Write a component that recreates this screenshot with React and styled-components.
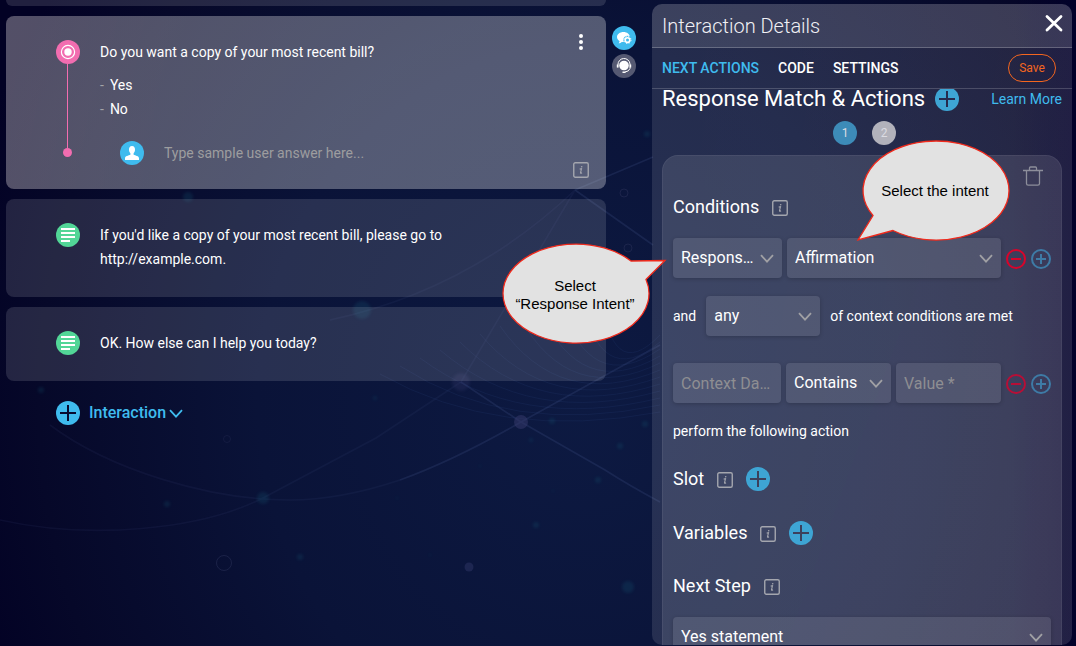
import React from 'react';
import styled, { createGlobalStyle, css } from 'styled-components';

const Global = createGlobalStyle`
  *, *::before, *::after { box-sizing: border-box; }
  html, body { margin: 0; height: 100%; }
  #root { height: 100%; }
  body {
    font-family: Roboto, "Liberation Sans", sans-serif;
    font-size: 14px;
    line-height: 24px;
    color: #fff;
    background: #020226;
    overflow: hidden;
  }
  button, input, select { font: inherit; color: inherit; margin: 0; padding: 0; border: 0; background: none; outline: 0; }
  button { display: inline-flex; align-items: center; justify-content: center; cursor: pointer; }
  h1, h2, h3, p, ul { margin: 0; padding: 0; font-weight: 400; }
  svg { display: block; flex: none; overflow: visible; }
`;

const Page = styled.div`
  position: relative;
  isolation: isolate;
  height: 100vh;
  overflow: hidden;
  display: grid;
  grid-template-columns: minmax(0, 1fr) 24px 436px;
  padding: 0 4px 0 6px;
  background:
    linear-gradient(90deg, rgba(2, 1, 38, 0) 94%, #02012a 100%),
    radial-gradient(ellipse 60% 110% at 54% 62%, #0d1a42 0%, #0a1338 50%, #060829 84%, #020124 100%);
`;

const Backdrop = styled.svg`
  position: absolute;
  inset: 0;
  width: 100%;
  height: 100%;
  z-index: -1;
`;

const Flow = styled.main`
  display: flex;
  flex-direction: column;
  gap: 10px;
  margin-right: 6px;
`;

const Card = styled.article`
  position: relative;
  display: grid;
  grid-template-columns: 24px minmax(0, 1fr);
  column-gap: 20px;
  padding: 24px 120px 26px 50px;
  border-radius: 8px;
  background: ${p => (p.$active
    ? 'linear-gradient(100deg, rgba(255,245,245,.32), rgba(255,255,255,.3) 30%)'
    : 'rgba(255,255,255,.125)')};
  ${p => p.$active && css`padding-bottom: 24px;`}
`;

const CardTail = styled.div`
  height: 6px;
  border-radius: 0 0 8px 8px;
  background: rgba(255, 255, 255, .125);
`;

const Disc = styled.span`
  display: flex;
  align-items: center;
  justify-content: center;
  flex: none;
  width: 24px;
  height: 24px;
  border-radius: 50%;
  background: ${p => p.$color};
`;

const Timeline = styled.div`
  display: flex;
  flex-direction: column;
  align-items: center;
  padding-bottom: 8px;

  &::after {
    content: '';
    width: 9px;
    height: 9px;
    margin-right: 1px;
    border-radius: 50%;
    background: #f26db0;
  }
`;

const Stem = styled.i`
  flex: 1;
  width: 1px;
  margin-right: 1px;
  background: #f26db0;
`;

const Choices = styled.ul`
  list-style: none;
  padding-top: 9px;
`;

const Choice = styled.li`
  display: flex;
  gap: 6px;
  &::before { content: '-'; color: #a3a3a8; }
`;

const Answer = styled.label`
  display: flex;
  align-items: center;
  gap: 20px;
  margin: 20px 0 0 20px;
`;

const AnswerInput = styled.input`
  flex: 1;
  min-width: 0;
  height: 24px;
  &::placeholder { color: #9d9d9f; opacity: 1; }
`;

const CardCorner = styled.div`
  position: absolute;
  display: flex;
  right: 17px;
  ${p => p.$at}: ${p => (p.$at === 'top' ? '18px' : '11px')};
`;

const IconButton = styled.button`
  width: ${p => p.$size || 16}px;
  height: ${p => p.$size || 16}px;
  flex: none;
`;

const InfoButton = styled(IconButton)`
  margin-top: 2px;
`;

const AddInteraction = styled.button`
  align-self: flex-start;
  gap: 9px;
  margin: 10px 0 0 50px;
  color: #3fbbee;
  font-size: 16px;
  font-weight: 500;
`;

const AddLabel = styled.span`
  display: flex;
  align-items: center;
  gap: 3px;
`;

const Rail = styled.nav`
  display: flex;
  flex-direction: column;
  gap: 4px;
  padding-top: 26px;
`;

const Panel = styled.aside`
  display: flex;
  flex-direction: column;
  min-height: 0;
  margin: 4px 0 1px 16px;
  border-radius: 10px;
  overflow: hidden;
  background: linear-gradient(100deg, rgba(255,255,255,.105), rgba(255,245,255,.125));
`;

const PanelHead = styled.header`
  display: flex;
  align-items: center;
  justify-content: space-between;
  height: 44px;
  flex: none;
  padding: 0 8px 0 10px;
  background: rgba(255, 255, 255, .11);
  border-bottom: 1px solid rgba(255, 255, 255, .22);
`;

const PanelTitle = styled.h1`
  font-size: 20px;
  font-weight: 300;
  color: #f0f0f4;
`;

const Tabs = styled.nav`
  display: flex;
  align-items: center;
  gap: 19px;
  height: 41px;
  flex: none;
  padding: 0 16px 0 10px;
  border-bottom: 1px solid rgba(255, 255, 255, .18);
`;

const Tab = styled.button`
  font-weight: 500;
  color: ${p => (p.$active ? '#3fbbee' : '#fff')};
`;

const Save = styled.button`
  margin-left: auto;
  width: 48px;
  height: 28px;
  border: 1px solid #f4661f;
  border-radius: 14px;
  color: #f4661f;
  font-size: 12px;
`;

const PanelBody = styled.div`
  flex: 1;
  min-height: 0;
  overflow: hidden;
  padding: 0 10px;
`;

const Heading = styled.div`
  display: flex;
  align-items: center;
  gap: 10px;
  margin-top: -2px;
  height: 24px;
`;

const HeadingText = styled.h2`
  font-size: 22px;
  line-height: 20px;
`;

const LearnMore = styled.a`
  margin-left: auto;
  color: #3fbbee;
  text-decoration: none;
`;

const Pager = styled.div`
  display: flex;
  justify-content: center;
  gap: 15px;
  padding: 10px 0 10px 5px;
`;

const PageDot = styled.button`
  width: 24px;
  height: 24px;
  border-radius: 50%;
  background: ${p => (p.$active ? '#3d8bb8' : '#b2b2bb')};
  color: #dcdce2;
  font-size: 12px;
`;

const Rule = styled.section`
  display: flex;
  flex-direction: column;
  padding: 10px 10px 60px;
  border: 1px solid rgba(255, 255, 255, .06);
  border-radius: 16px;
  background: linear-gradient(110deg, rgba(255,255,255,.105), rgba(255,245,255,.11));
`;

const RuleTools = styled.div`
  display: flex;
  justify-content: flex-end;
  height: 20px;
  padding-right: 8px;
`;

const Section = styled.div`
  display: flex;
  align-items: center;
  gap: 13px;
  height: 24px;
  margin-top: ${p => p.$top}px;
`;

const SectionTitle = styled.h3`
  font-size: 18px;
`;

const FieldRow = styled.div`
  display: flex;
  align-items: center;
  gap: ${p => p.$gap || 5}px;
  margin-top: ${p => p.$top}px;
`;

const fieldBox = css`
  width: 100%;
  height: 40px;
  padding: 0 8px;
  border-radius: 4px;
  background: rgba(255, 255, 255, .105);
  box-shadow: 0 1px 4px rgba(0, 0, 0, .2);
  font-size: 16px;
  text-overflow: ellipsis;
  overflow: hidden;
  white-space: nowrap;
`;

const FieldWrap = styled.span`
  position: relative;
  display: block;
  flex: ${p => (p.$width ? `0 0 ${p.$width}px` : '1 1 0')};
  min-width: 0;
`;

const SelectBox = styled.select`
  ${fieldBox}
  appearance: none;
  padding-right: 28px;
  option { color: #222; }
`;

const TextBox = styled.input`
  ${fieldBox}
  &::placeholder { color: #8e8e92; opacity: 1; }
`;

const Caret = styled.span`
  position: absolute;
  right: 8px;
  top: 16px;
  pointer-events: none;
`;

const Sentence = styled.p`
  margin-top: ${p => p.$top || 0}px;
`;

const Callout = styled.div`
  position: absolute;
  width: ${p => p.$w}px;
  height: ${p => p.$h}px;
  right: ${p => p.$right}px;
  top: ${p => p.$top}px;
  pointer-events: none;
`;

const CalloutText = styled.p`
  position: absolute;
  left: ${p => p.$left}px;
  width: 146px;
  top: 0;
  height: 103px;
  display: flex;
  align-items: center;
  justify-content: center;
  text-align: center;
  white-space: pre-line;
  color: #000;
  font-family: "Liberation Sans", Arial, sans-serif;
  font-size: 15px;
  line-height: 18px;
`;

const InfoIcon = () => (
  <svg width="16" height="16" viewBox="0 0 16 16">
    <rect x="0.75" y="0.75" width="14.5" height="14.5" rx="1.5" fill="none" stroke="#a4a6ae" strokeWidth="1.4" />
    <path d="M6.7 7.1 L8.5 6.7 L7.5 10.9 Q7.5 11.6 9 10.7" fill="none" stroke="#a4a6ae" strokeWidth="1.1" />
    <circle cx="8.7" cy="4.8" r=".8" fill="#a4a6ae" />
  </svg>
);

const Info = ({ label }) => <InfoButton type="button" aria-label={label}><InfoIcon /></InfoButton>;

const PlusDisc = ({ color = '#3ea5d4', cross = '#262b4e' }) => (
  <svg width="24" height="24" viewBox="0 0 24 24">
    <circle cx="12" cy="12" r="12" fill={color} />
    <path d="M12 4v16M4 12h16" stroke={cross} strokeWidth="2" />
  </svg>
);

const RoundOutline = ({ color, plus }) => (
  <svg width="20" height="20" viewBox="0 0 20 20">
    <circle cx="10" cy="10" r="9" fill="none" stroke={color} strokeWidth="2" />
    <path d={plus ? 'M5 10h10M10 5v10' : 'M5 10h10'} stroke={color} strokeWidth="2" />
  </svg>
);

const Chevron = ({ color = '#a0a0a4' }) => (
  <svg width="14" height="9" viewBox="0 0 14 9">
    <path d="M1 1.2 7 7.6 13 1.2" fill="none" stroke={color} strokeWidth="1.8" />
  </svg>
);

const LinesDisc = () => (
  <Disc $color="#52d697">
    <svg width="24" height="24" viewBox="0 0 24 24">
      <path d="M5 6h14M5 10h14M5 14h14M5 18h9" stroke="#fff" strokeWidth="2" />
    </svg>
  </Disc>
);

const Select = ({ value, label, width }) => (
  <FieldWrap $width={width}>
    <SelectBox aria-label={label} defaultValue={value}>
      <option>{value}</option>
    </SelectBox>
    <Caret><Chevron /></Caret>
  </FieldWrap>
);

const TextField = ({ placeholder, label, width }) => (
  <FieldWrap $width={width}>
    <TextBox aria-label={label} placeholder={placeholder} />
  </FieldWrap>
);

const Pair = styled.span`
  display: flex;
  gap: 5px;
  padding-top: 2px;
`;

const RowButtons = ({ red }) => (
  <Pair>
    <IconButton type="button" $size={20} aria-label="Remove condition"><RoundOutline color={red} /></IconButton>
    <IconButton type="button" $size={20} aria-label="Add condition"><RoundOutline color="#3e7ba6" plus /></IconButton>
  </Pair>
);

const glows = [
  [263, 498, 6], [167, 504, 3], [362, 310, 9], [536, 525, 3], [628, 587, 6], [188, 197, 5],
  [300, 557, 3], [620, 446, 3], [598, 480, 3], [647, 134, 3], [375, 398, 2], [552, 421, 3], [41, 390, 3],
  [645, 424, 3], [430, 555, 1], [397, 498, 1], [480, 466, 1], [531, 440, 2], [553, 491, 1],
];

const Network = () => (
  <Backdrop viewBox="0 0 1076 646" preserveAspectRatio="none" aria-hidden="true">
    <defs>
      <filter id="soft"><feGaussianBlur stdDeviation="1.6" /></filter>
    </defs>
    <g fill="none" stroke="#4a5a90" strokeWidth="1.6">
      <g opacity=".22">
        <path d="M521 422 L461 382 M521 422 L660 345 M521 422 L605 470 Q630 486 660 502 M521 422 Q455 460 400 480" />
        <path d="M575 190 L653 245 M575 190 L653 157" />
      </g>
      <g opacity=".1">
        <path d="M400 480 Q340 500 290 500 C210 500 110 470 50 425 M461 382 L376 438 L263 498 C200 530 90 540 0 520" />
        <path d="M461 382 L575 190 Q470 290 330 320" />
      </g>
    </g>
    <g fill="none" stroke="#33508e" strokeWidth="1" opacity=".14">
      {Array.from({ length: 12 }, (_, i) => (
        <path key={i} d={`M${380 + i * 20} ${374 - i * 8} Q${500 + i * 10} ${442 - i * 5} 660 ${412 - i * 7}`} />
      ))}
    </g>
    <g fill="#137087" opacity=".18" filter="url(#soft)">
      {glows.map(([x, y, r]) => <circle key={`${x}-${y}`} cx={x} cy={y} r={r} />)}
    </g>
    <g fill="#34396a">
      <circle cx="521" cy="422" r="7" opacity=".55" />
      <circle cx="461" cy="382" r="9" opacity=".3" filter="url(#soft)" />
      <circle cx="469" cy="567" r="4.5" opacity=".45" />
    </g>
    <g fill="none" stroke="#31375f" strokeWidth="1" opacity=".45">
      <circle cx="224" cy="563" r="7.5" />
      <circle cx="624" cy="193" r="4" />
      <circle cx="628" cy="248" r="4" />
      <circle cx="227" cy="439" r="3.5" opacity=".6" />
    </g>
  </Backdrop>
);

const bubble = { fill: '#e2e2e2', stroke: '#f02a1c', strokeWidth: 1.3, strokeLinejoin: 'miter' };

export default function App() {
  return (
    <Page>
      <Global />
      <Network />

      <Flow>
        <CardTail />
        <Card $active>
          <Timeline>
            <Disc $color="#f26db0">
              <svg width="16" height="16" viewBox="0 0 16 16">
                <circle cx="8" cy="8" r="6.6" fill="none" stroke="#fff" strokeWidth="1.2" />
                <circle cx="8" cy="8" r="3.7" fill="#fff" />
              </svg>
            </Disc>
            <Stem />
          </Timeline>
          <div>
            <p>Do you want a copy of your most recent bill?</p>
            <Choices>
              <Choice>Yes</Choice>
              <Choice>No</Choice>
            </Choices>
            <Answer>
              <Disc $color="#3fbbee">
                <svg width="16" height="16" viewBox="0 0 16 16">
                  <path d="M8 1C5.8 1 4.8 2.7 5 5c.1 1.8.9 2.6 1.4 3.3v1.5C4.5 10.7 1 11 1 13.2V15h14v-1.8c0-2.2-3.5-2.5-5.4-3.4V8.3C10.1 7.6 10.9 6.8 11 5c.2-2.3-.8-4-3-4z" fill="#fff" />
                </svg>
              </Disc>
              <AnswerInput aria-label="Sample user answer" placeholder="Type sample user answer here..." />
            </Answer>
          </div>
          <CardCorner $at="top">
            <IconButton type="button" aria-label="More options">
              <svg width="16" height="16" viewBox="0 0 16 16" fill="#fff">
                <circle cx="8" cy="2" r="2" /><circle cx="8" cy="8" r="2" /><circle cx="8" cy="14" r="2" />
              </svg>
            </IconButton>
          </CardCorner>
          <CardCorner $at="bottom"><Info label="Interaction info" /></CardCorner>
        </Card>

        <Card>
          <LinesDisc />
          <p>If you'd like a copy of your most recent bill, please go to http://example.com.</p>
        </Card>

        <Card>
          <LinesDisc />
          <p>OK. How else can I help you today?</p>
        </Card>

        <AddInteraction type="button">
          <PlusDisc color="#3fbbee" cross="#070a2f" />
          <AddLabel>Interaction <Chevron color="#3fbbee" /></AddLabel>
        </AddInteraction>
      </Flow>

      <Rail>
        <IconButton type="button" $size={24} aria-label="Automation">
          <Disc $color="#3fbbee">
            <svg width="24" height="24" viewBox="0 0 24 24">
              <path d="M11.5 6C7.9 6 5 8.2 5 11c0 1.7 1 3.1 2.5 4 .1.9-.3 1.6-.9 2.2 1.3 0 2.4-.6 3.1-1.3.6.1 1.2.1 1.8.1 3.6 0 6.3-2.2 6.3-5S15.1 6 11.5 6z" fill="#fff" />
              <circle cx="15.5" cy="14" r="4.2" fill="#3fbbee" />
              <circle cx="15.5" cy="14" r="2.3" fill="none" stroke="#fff" strokeWidth="1.6" />
              <circle cx="15.5" cy="14" r="3.5" fill="none" stroke="#fff" strokeWidth="1" strokeDasharray="1.4 1.35" />
            </svg>
          </Disc>
        </IconButton>
        <IconButton type="button" $size={24} aria-label="Agent">
          <Disc $color="#555972">
            <svg width="24" height="24" viewBox="0 0 24 24">
              <circle cx="12" cy="11.5" r="4.8" fill="#fff" />
              <path d="M6 13.5V11a6 6 0 0 1 12-1v4.5q-1 3-5 3.5" fill="none" stroke="#fff" strokeWidth="1" />
              <path d="M5.5 10.5v3M18.5 10.5v3M10.5 18.3h3" stroke="#fff" strokeWidth="1.4" />
            </svg>
          </Disc>
        </IconButton>
      </Rail>

      <Panel>
        <PanelHead>
          <PanelTitle>Interaction Details</PanelTitle>
          <IconButton type="button" $size={20} aria-label="Close">
            <svg width="20" height="20" viewBox="0 0 20 20">
              <path d="M3 .5 17 14M17 .5 3 14" stroke="#fff" strokeWidth="2.8" strokeLinecap="round" />
            </svg>
          </IconButton>
        </PanelHead>
        <Tabs>
          <Tab type="button" $active>NEXT ACTIONS</Tab>
          <Tab type="button">CODE</Tab>
          <Tab type="button">SETTINGS</Tab>
          <Save type="button">Save</Save>
        </Tabs>

        <PanelBody>
          <Heading>
            <HeadingText>Response Match &amp; Actions</HeadingText>
            <IconButton type="button" $size={24} aria-label="Add response match"><PlusDisc /></IconButton>
            <LearnMore href="#learn-more">Learn More</LearnMore>
          </Heading>
          <Pager>
            <PageDot type="button" $active>1</PageDot>
            <PageDot type="button">2</PageDot>
          </Pager>

          <Rule>
            <RuleTools>
              <IconButton type="button" $size={20} aria-label="Delete">
                <svg width="20" height="20" viewBox="0 0 20 20" fill="none" stroke="#8d8e9b" strokeWidth="1.3">
                  <path d="M0 4.5h20M3.5 4.5v13q0 1.7 1.7 1.7h9.6q1.7 0 1.7-1.7v-13M6.5 4.5V2q0-1 1-1h5q1 0 1 1v2.5" />
                </svg>
              </IconButton>
            </RuleTools>
            <Section $top={9}>
              <SectionTitle>Conditions</SectionTitle>
              <Info label="Conditions info" />
            </Section>
            <FieldRow $top={19}>
              <Select label="Condition type" value="Response Intent" width={109} />
              <Select label="Intent" value="Affirmation" />
              <RowButtons red="#d8042b" />
            </FieldRow>
            <FieldRow $top={18} $gap={10}>
              <span>and</span>
              <Select label="Match mode" value="any" width={114} />
              <span>of context conditions are met</span>
            </FieldRow>
            <FieldRow $top={27}>
              <TextField label="Context data" placeholder="Context Data Variable *" width={108} />
              <Select label="Operator" value="Contains" width={105} />
              <TextField label="Value" placeholder="Value *" />
              <RowButtons red="#b80e36" />
            </FieldRow>
            <Sentence $top={16}>perform the following action</Sentence>
            <Section $top={24}>
              <SectionTitle>Slot</SectionTitle>
              <Info label="Slot info" />
              <IconButton type="button" $size={24} aria-label="Add slot"><PlusDisc cross="#3c405c" /></IconButton>
            </Section>
            <Section $top={30}>
              <SectionTitle>Variables</SectionTitle>
              <Info label="Variables info" />
              <IconButton type="button" $size={24} aria-label="Add variable"><PlusDisc cross="#3c405c" /></IconButton>
            </Section>
            <Section $top={29}>
              <SectionTitle>Next Step</SectionTitle>
              <Info label="Next step info" />
            </Section>
            <FieldRow $top={19}>
              <Select label="Next step" value="Yes statement" />
            </FieldRow>
          </Rule>
        </PanelBody>
      </Panel>

      <Callout $w={166} $h={102} $right={408} $top={243}>
        <svg width="166" height="102" viewBox="0 0 166 102">
          <path d="M129 18 L163 17.5 L144 36.5 A73 49.5 0 1 1 129 18 Z" {...bubble} />
        </svg>
        <CalloutText $left={0}>{'Select\n“Response Intent”'}</CalloutText>
      </Callout>
      <Callout $w={154} $h={104} $right={67} $top={139}>
        <svg width="154" height="104" viewBox="0 0 154 104">
          <path d="M38 91.5 L3 101 L18 76.5 A73 49.5 0 1 1 38 91.5 Z" {...bubble} />
        </svg>
        <CalloutText $left={7}>Select the intent</CalloutText>
      </Callout>
    </Page>
  );
}
